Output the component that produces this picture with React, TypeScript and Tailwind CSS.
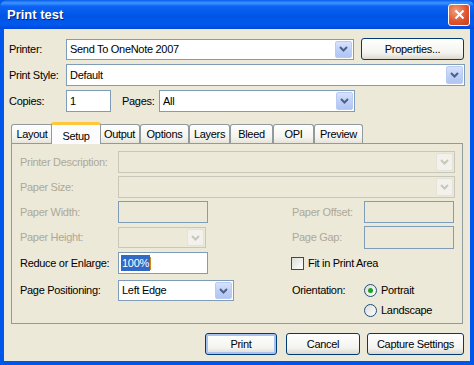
import React from "react";

function Chevron({ disabled }: { disabled?: boolean }) {
  return (
    <svg width="9" height="6" viewBox="0 0 9 6">
      <path
        d="M1 1 L4.5 4.5 L8 1"
        fill="none"
        stroke={disabled ? "#C9C7BA" : "#4D6185"}
        strokeWidth="2"
      />
    </svg>
  );
}

function Combo({
  value,
  width,
  height = 21,
  disabled,
}: {
  value?: string;
  width: string;
  height?: number;
  disabled?: boolean;
}) {
  return (
    <div
      className={`${width} ${height === 22 ? "h-[22px]" : "h-[21px]"} flex border ${
        disabled ? "border-[#C9C7BA] bg-[#ECE9D8]" : "border-[#7F9DB9] bg-white"
      }`}
    >
      <div className="flex-1 flex items-center pl-[3px] text-black">{value}</div>
      <div
        className={`w-[17px] m-px flex items-center justify-center rounded-[2px] border ${
          disabled
            ? "border-[#E4E2D9] bg-[#F2F1EC]"
            : "border-[#B9CBF3] bg-[linear-gradient(to_bottom,#D7E3FD,#BBCEF7_60%,#AFC5F4)]"
        }`}
      >
        <Chevron disabled={disabled} />
      </div>
    </div>
  );
}

function Button({ label, width, focus }: { label: string; width: string; focus?: boolean }) {
  return (
    <div
      className={`${width} h-[22px] flex items-center justify-center rounded-[3px] border border-[#003C74] bg-[linear-gradient(to_bottom,#FFFFFF,#F3F3EF_70%,#DCD8CE)] ${
        focus ? "shadow-[inset_0_0_0_2px_#A9C1EE]" : ""
      }`}
    >
      {label}
    </div>
  );
}

function Tab({ label, width, active }: { label: string; width: string; active?: boolean }) {
  if (active) {
    return (
      <div
        className={`${width} h-[22px] -mb-px -mx-[2px] relative z-10 flex justify-center pt-[3px] rounded-t-[3px] border-x border-t-[3px] border-x-[#919B9C] border-t-[#FFC83C] bg-[#FCFCFE]`}
      >
        {label}
      </div>
    );
  }
  return (
    <div
      className={`${width} h-[19px] flex items-center justify-center rounded-t-[3px] border-x border-t border-[#919B9C] bg-[linear-gradient(to_bottom,#FFFFFF,#F3F3EF_70%,#E6E3D8)]`}
    >
      {label}
    </div>
  );
}

export default function App() {
  const tabs = [
    { label: "Layout", width: "w-[42px]" },
    { label: "Setup", width: "w-[50px]", active: true },
    { label: "Output", width: "w-[41px]" },
    { label: "Options", width: "w-[49px]" },
    { label: "Layers", width: "w-[41px]" },
    { label: "Bleed", width: "w-[43px]" },
    { label: "OPI", width: "w-[41px]" },
    { label: "Preview", width: "w-[49px]" },
  ];

  return (
    <div className="w-[474px] h-[365px] flex flex-col bg-[#0055EA] font-['Liberation_Sans',Arial,sans-serif] text-[11px] tracking-[-0.3px] text-black">
      {/* title bar */}
      <div className="h-[29px] flex items-center justify-between pl-[7px] pr-[4px] rounded-t-[7px] bg-[linear-gradient(to_bottom,#0A5DEB_0%,#3D95FF_10%,#0C63F3_22%,#0055E5_55%,#0058EE_85%,#0048D8_100%)]">
        <span className="text-white font-bold text-[13px] tracking-normal [text-shadow:1px_1px_0_#0A1E6E]">
          Print test
        </span>
        <div className="w-[22px] h-[22px] rounded-[3px] border border-white flex items-center justify-center bg-[radial-gradient(circle_at_35%_30%,#F0A080,#E0552E_55%,#C2411E)]">
          <svg width="11" height="11" viewBox="0 0 11 11">
            <path d="M1.5 1.5 L9.5 9.5 M9.5 1.5 L1.5 9.5" stroke="white" strokeWidth="2" />
          </svg>
        </div>
      </div>

      {/* body */}
      <div className="flex-1 mx-[4px] mb-[4px] bg-[#ECE9D8] pl-[5px] flex flex-col">
        <div className="mt-[9px] h-[22px] flex items-center">
          <span className="w-[57px]">Printer:</span>
          <Combo value="Send To OneNote 2007" width="w-[288px]" />
          <div className="ml-[7px]">
            <Button label="Properties..." width="w-[103px]" />
          </div>
        </div>

        <div className="mt-[4px] h-[22px] flex items-center">
          <span className="w-[57px]">Print Style:</span>
          <Combo value="Default" width="w-[399px]" height={22} />
        </div>

        <div className="mt-[4px] h-[22px] flex items-center">
          <span className="w-[57px]">Copies:</span>
          <div className="w-[45px] h-[22px] border border-[#7F9DB9] bg-white flex items-center pl-[3px]">
            1
          </div>
          <span className="ml-[11px] w-[37px]">Pages:</span>
          <Combo value="All" width="w-[196px]" height={22} />
        </div>

        {/* tabs */}
        <div className="mt-[10px] ml-[2px] h-[21px] flex items-end">
          {tabs.map((t) => (
            <Tab key={t.label} label={t.label} width={t.width} active={t.active} />
          ))}
        </div>

        <div className="ml-[2px] w-[452px] h-[181px] border border-[#919B9C] bg-[#ECE9D8] pl-[8px] pt-[7px] flex flex-col">
          <div className="h-[22px] flex items-center text-[#ACA899]">
            <span className="w-[98px]">Printer Description:</span>
            <Combo width="w-[337px]" height={22} disabled />
          </div>

          <div className="mt-[3px] h-[22px] flex items-center text-[#ACA899]">
            <span className="w-[98px]">Paper Size:</span>
            <Combo width="w-[337px]" height={22} disabled />
          </div>

          <div className="mt-[3px] h-[22px] flex items-center text-[#ACA899]">
            <span className="w-[98px]">Paper Width:</span>
            <div className="w-[90px] h-[22px] border border-[#7F9DB9]" />
            <span className="ml-[84px] w-[72px]">Paper Offset:</span>
            <div className="w-[90px] h-[22px] border border-[#7F9DB9]" />
          </div>

          <div className="mt-[3px] h-[23px] flex items-center text-[#ACA899]">
            <span className="w-[98px]">Paper Height:</span>
            <Combo width="w-[88px]" disabled />
            <span className="ml-[86px] w-[72px]">Page Gap:</span>
            <div className="w-[90px] h-[23px] border border-[#7F9DB9]" />
          </div>

          <div className="mt-[3px] h-[22px] flex items-center">
            <span className="w-[98px]">Reduce or Enlarge:</span>
            <div className="w-[90px] h-[22px] border border-[#7F9DB9] bg-white flex items-center pl-[2px]">
              <span className="bg-[#316AC5] text-white px-px">100%</span>
              <span className="w-px h-[13px] bg-[#D08A1A]" />
            </div>
            <div className="ml-[83px] flex items-center">
              <div className="w-[13px] h-[13px] border border-[#1C5180] bg-[linear-gradient(135deg,#DCDCD7,#FFFFFF)]" />
              <span className="ml-[4px]">Fit in Print Area</span>
            </div>
          </div>

          <div className="mt-[6px] flex items-start">
            <div className="h-[21px] flex items-center">
              <span className="w-[98px]">Page Positioning:</span>
              <Combo value="Left Edge" width="w-[116px]" />
            </div>
            <div className="ml-[58px] flex items-start">
              <span className="w-[72px] h-[20px] flex items-center">Orientation:</span>
              <div className="flex flex-col">
                <div className="h-[20px] flex items-center">
                  <div className="w-[13px] h-[13px] rounded-full border border-[#1C5180] bg-[linear-gradient(135deg,#DCDCD7,#FFFFFF)] flex items-center justify-center">
                    <div className="w-[5px] h-[5px] rounded-full bg-[#21A121]" />
                  </div>
                  <span className="ml-[4px]">Portrait</span>
                </div>
                <div className="h-[20px] flex items-center">
                  <div className="w-[13px] h-[13px] rounded-full border border-[#1C5180] bg-[linear-gradient(135deg,#DCDCD7,#FFFFFF)]" />
                  <span className="ml-[4px]">Landscape</span>
                </div>
              </div>
            </div>
          </div>
        </div>

        <div className="mt-[9px] flex items-center pl-[196px]">
          <Button label="Print" width="w-[72px]" focus />
          <div className="ml-[9px]">
            <Button label="Cancel" width="w-[74px]" />
          </div>
          <div className="ml-[7px]">
            <Button label="Capture Settings" width="w-[97px]" />
          </div>
        </div>
      </div>
    </div>
  );
}
